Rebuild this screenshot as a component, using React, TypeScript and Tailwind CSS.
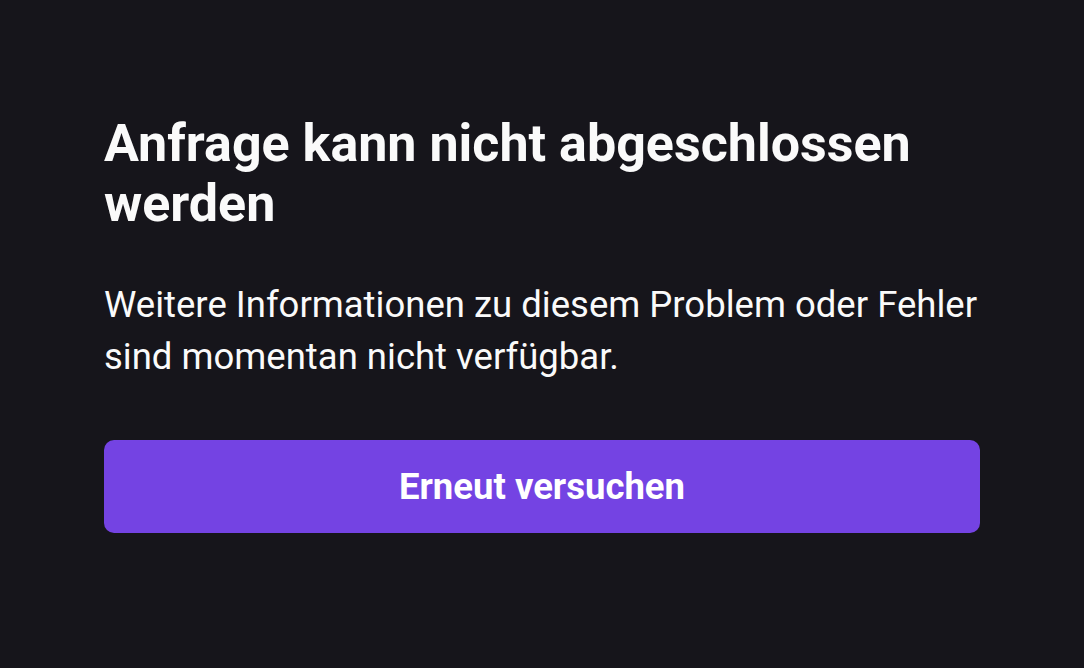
export default function App() {
  return (
    <div className="min-h-[668px] w-full bg-[#16151b] font-['Roboto',sans-serif] text-[#fafafa]">
      <div className="flex flex-col px-[104px] pt-[114px]">
        <h1 className="text-[52px] font-bold leading-[60px]">
          Anfrage kann nicht abgeschlossen werden
        </h1>
        <p className="mt-[45px] text-[36.5px] leading-[52px]">
          Weitere Informationen zu diesem Problem oder Fehler sind momentan nicht verfügbar.
        </p>
        <button className="mt-[57px] flex h-[93px] w-full items-center justify-center rounded-[10px] bg-[#7443e3] pt-[2px] text-[36.5px] font-bold text-white">
          Erneut versuchen
        </button>
      </div>
    </div>
  );
}
